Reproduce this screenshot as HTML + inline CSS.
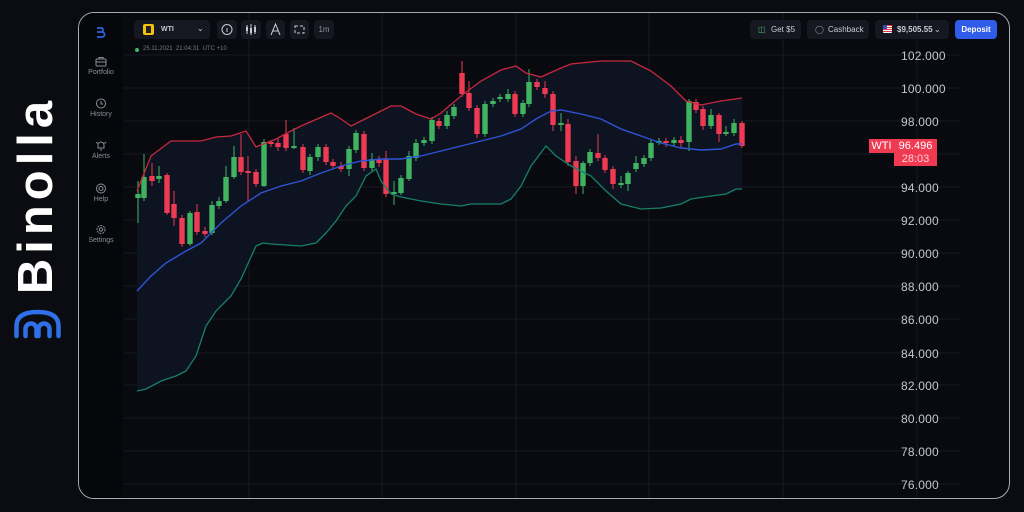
<!DOCTYPE html>
<html><head><meta charset="utf-8"><style>
*{margin:0;padding:0;box-sizing:border-box}
body{width:1024px;height:512px;background:#0b0c11;overflow:hidden;position:relative;font-family:"Liberation Sans",sans-serif}
.frame{position:absolute;left:78px;top:12px;width:932px;height:487px;border:1.5px solid #a9abb0;border-radius:16px;background:#090a0f;overflow:hidden}
.side{position:absolute;left:0;top:0;width:44px;height:100%;background:#06070b}
.nav{position:absolute;left:0;width:44px;text-align:center;color:#8c8f99;font-size:7px}
.nav svg{display:block;margin:0 auto 2px}
.btn{position:absolute;top:7px;height:19px;background:#161821;border-radius:4px;color:#c9cbd2;font-size:8px;line-height:19px}
.ax{position:absolute;left:822px;font-size:12px;color:#c4c6cc;letter-spacing:0.2px}
.brand{position:absolute;left:36px;top:195px;transform:translate(-50%,-50%) rotate(-90deg);color:#fff;font-size:49px;font-weight:bold;letter-spacing:5px;white-space:nowrap}
</style></head><body>
<div class="brand">Binolla</div>
<svg style="position:absolute;left:0;top:0" width="80" height="512">
<g fill="none" stroke="#2f6fe8" stroke-width="4.5" stroke-linecap="round">
<path d="M16.5 336 V326 Q16.5 312 37.5 312 Q58.5 312 58.5 326 V336"/>
<path d="M25.5 336 V329 a5.5 5.5 0 0 1 11 0 V336"/>
<path d="M38.5 336 V329 a5.5 5.5 0 0 1 11 0 V336"/>
</g></svg>
<div class="frame">
<svg id="ch" style="position:absolute;left:0;top:0" width="932" height="487"></svg>
<div class="side"></div>
<svg style="position:absolute;left:16px;top:13px" width="12" height="12"><path d="M2 2 H7 a2.5 2.5 0 0 1 0 4 a2.5 2.5 0 0 1 0 5 H2 M2 6 H7" fill="none" stroke="#2c62e0" stroke-width="1.8"/></svg>
<div class="nav" style="top:43px"><svg width="12" height="11"><rect x="1" y="3" width="10" height="7" rx="1" fill="none" stroke="#8c8f99"/><path d="M4 3V1.5H8V3M1 6H11" fill="none" stroke="#8c8f99"/></svg>Portfolio</div>
<div class="nav" style="top:85px"><svg width="12" height="11"><circle cx="6" cy="5.5" r="4.5" fill="none" stroke="#8c8f99"/><path d="M6 3V6H8" fill="none" stroke="#8c8f99"/></svg>History</div>
<div class="nav" style="top:127px"><svg width="12" height="11"><path d="M3 8V5a3 3 0 0 1 6 0V8H2.5H9.5M5 10H7M1 2L2.5 3.5M11 2L9.5 3.5" fill="none" stroke="#8c8f99"/></svg>Alerts</div>
<div class="nav" style="top:170px"><svg width="12" height="11"><circle cx="6" cy="5.5" r="4.5" fill="none" stroke="#8c8f99"/><circle cx="6" cy="5.5" r="2" fill="none" stroke="#8c8f99"/></svg>Help</div>
<div class="nav" style="top:211px"><svg width="12" height="11"><circle cx="6" cy="5.5" r="4" fill="none" stroke="#8c8f99" stroke-dasharray="2 1"/><circle cx="6" cy="5.5" r="1.7" fill="none" stroke="#8c8f99"/></svg>Settings</div>

<div class="btn" style="left:55px;width:76px"><span style="position:absolute;left:9px;top:4px;width:11px;height:11px;background:#f4c20d;border-radius:2px"></span><span style="position:absolute;left:12px;top:6px;width:5px;height:7px;background:#222"></span><span style="position:absolute;left:27px;font-size:7px;font-weight:bold">WTI</span><span style="position:absolute;left:63px;top:-1px;font-size:8px">&#8964;</span></div>
<div class="btn" style="left:138px;width:20px"><svg width="20" height="19"><circle cx="10" cy="9.5" r="5" fill="none" stroke="#c9cbd2"/><path d="M10 8V12" stroke="#c9cbd2"/></svg></div>
<div class="btn" style="left:162px;width:20px"><svg width="20" height="19"><path d="M6 5V14M10 4V15M14 5V14" stroke="#c9cbd2"/><rect x="5" y="7" width="2" height="4" fill="#c9cbd2"/><rect x="9" y="8" width="2" height="5" fill="#c9cbd2"/><rect x="13" y="7" width="2" height="5" fill="#c9cbd2"/></svg></div>
<div class="btn" style="left:187px;width:19px"><svg width="19" height="19"><path d="M5 15L9.5 4L14 15M7 11H12" fill="none" stroke="#c9cbd2"/></svg></div>
<div class="btn" style="left:211px;width:19px"><svg width="19" height="19"><path d="M5 6H14V13H5Z" fill="none" stroke="#c9cbd2" stroke-dasharray="3 2"/></svg></div>
<div class="btn" style="left:235px;width:20px;text-align:center;color:#8c8f99">1m</div>

<div class="btn" style="left:671px;width:51px"><span style="position:absolute;left:8px;color:#3fb866">&#9707;</span><span style="position:absolute;left:21px">Get $5</span></div>
<div class="btn" style="left:728px;width:62px"><span style="position:absolute;left:8px;color:#8c8f99">&#9711;</span><span style="position:absolute;left:21px">Cashback</span></div>
<div class="btn" style="left:796px;width:74px"><span style="position:absolute;left:8px;top:5px;width:9px;height:8px;background:repeating-linear-gradient(#e0384b 0 1px,#fff 1px 2px);border-radius:1px"></span><span style="position:absolute;left:8px;top:5px;width:4px;height:4px;background:#3150b0"></span><span style="position:absolute;left:22px;font-weight:bold">$9,505.55</span><span style="position:absolute;left:59px">&#8964;</span></div>
<div class="btn" style="left:876px;width:42px;background:#2f5ce8;color:#fff;text-align:center;font-weight:bold">Deposit</div>

<div style="position:absolute;left:56px;top:35px;width:4px;height:4px;border-radius:50%;background:#3fb866"></div>
<div style="position:absolute;left:64px;top:33px;font-size:6px;color:#777a84">25.11.2021&nbsp;&nbsp;21:04:31&nbsp;&nbsp;UTC +10</div>

<div class="ax" style="top:36px">102.000</div>
<div class="ax" style="top:69px">100.000</div>
<div class="ax" style="top:102px">98.000</div>
<div class="ax" style="top:168px">94.000</div>
<div class="ax" style="top:201px">92.000</div>
<div class="ax" style="top:234px">90.000</div>
<div class="ax" style="top:267px">88.000</div>
<div class="ax" style="top:300px">86.000</div>
<div class="ax" style="top:334px">84.000</div>
<div class="ax" style="top:366px">82.000</div>
<div class="ax" style="top:399px">80.000</div>
<div class="ax" style="top:432px">78.000</div>
<div class="ax" style="top:465px">76.000</div>
<div style="position:absolute;left:790px;top:126px;width:25px;height:14px;background:#f03a52;color:#fff;font-size:11px;line-height:14px;text-align:center">WTI</div>
<div style="position:absolute;left:815px;top:126px;width:43px;height:27px;background:#f03a52;color:#fff;font-size:11px;line-height:13px;text-align:center;padding-top:1px">96.496<br><span style="color:#ffd0d6">28:03</span></div>
</div>
<script>
var s=document.getElementById('ch'),ns='http://www.w3.org/2000/svg',ox=78,oy=12;
function el(t,a){var e=document.createElementNS(ns,t);for(var k in a)e.setAttribute(k,a[k]);s.appendChild(e);return e}
function P(pts){return pts.map(function(p,i){return(i?'L':'M')+(p[0]-ox)+' '+(p[1]-oy)}).join(' ')}
var up=[[136,190],[150,155],[170,140],[200,140],[215,136],[230,135],[245,130],[255,146],[275,138],[290,130],[300,125],[330,112],[340,118],[350,125],[370,115],[390,105],[400,105],[415,113],[430,118],[440,112],[460,95],[480,80],[500,69],[515,65],[525,72],[540,76],[560,67],[570,63],[600,60],[630,60],[650,70],[670,85],[685,100],[700,104],[720,100],[741,97]];
var mid=[[136,290],[150,275],[165,262],[185,250],[200,242],[220,222],[240,205],[260,192],[280,185],[300,180],[320,172],[340,165],[360,160],[380,158],[400,158],[420,155],[440,150],[460,145],[480,140],[500,135],[520,128],[535,118],[550,110],[560,109],[580,113],[600,118],[620,128],[640,135],[660,142],[680,147],[700,149],[720,148],[735,143],[741,143]];
var lo=[[136,390],[145,388],[160,380],[175,375],[185,370],[195,355],[205,325],[215,310],[230,295],[240,278],[255,245],[262,242],[270,243],[300,245],[315,242],[325,232],[335,220],[345,205],[355,195],[365,175],[375,168],[380,180],[390,193],[400,196],[420,200],[440,203],[460,205],[470,203],[500,203],[510,198],[520,185],[530,165],[545,145],[555,155],[570,165],[590,175],[605,190],[620,203],[640,208],[660,207],[680,203],[690,198],[710,195],[725,193],[735,188],[741,188]];
var ys=[54,87,120,153,186,219,252,285,318,352,384,417,450,483];
ys.forEach(function(y){el('line',{x1:44,x2:880,y1:y-oy,y2:y-oy,stroke:'#161925','stroke-width':1})});
[248,381,515,648,782,916].forEach(function(x){el('line',{x1:x-ox,x2:x-ox,y1:0,y2:487,stroke:'#161925','stroke-width':1})});
el('path',{d:P(up)+' '+P(lo.slice().reverse()).replace('M','L')+'Z',fill:'#0d1320'});
var C=[[137,197,193,180,222],[143,197,176,153,200],[151,175,180,162,185],[158,178,175,165,182],[166,174,212,172,214],[173,203,217,190,225],[181,217,243,214,246],[189,243,212,210,245],[196,211,231,203,234],[204,230,233,226,236],[211,232,204,200,234],[218,205,200,196,208],[225,200,176,165,202],[233,176,156,145,178],[240,156,171,133,174],[247,170,172,155,200],[255,171,183,168,186],[263,185,141,138,186],[270,141,143,139,146],[277,142,146,138,150],[285,133,147,119,150],[293,146,145,127,148],[302,146,169,143,172],[309,170,156,153,174],[317,156,146,143,160],[325,146,161,143,164],[332,161,165,158,168],[340,165,168,161,171],[348,168,148,145,175],[355,149,132,129,152],[363,133,167,130,170],[371,167,158,152,170],[378,158,162,155,166],[385,158,193,150,196],[393,193,191,180,204],[400,192,177,174,194],[408,178,155,150,180],[415,157,142,138,160],[423,142,139,136,145],[431,140,119,116,143],[438,120,125,117,128],[446,125,114,110,128],[453,115,106,103,118],[461,72,93,60,96],[468,92,107,80,110],[476,107,133,104,137],[484,133,103,100,136],[492,103,100,97,106],[499,98,96,93,101],[507,98,93,88,101],[514,93,113,90,116],[522,113,102,99,116],[528,103,81,68,106],[536,81,86,78,89],[544,87,93,80,97],[552,93,124,90,130],[560,123,122,112,130],[567,123,161,118,165],[575,160,185,155,193],[582,185,162,160,193],[589,162,151,148,165],[597,152,157,133,160],[604,157,169,154,172],[612,168,183,165,188],[620,183,182,175,187],[627,183,172,170,190],[635,168,162,155,171],[643,163,157,154,166],[650,157,142,138,160],[658,141,140,137,144],[665,140,142,137,146],[673,142,139,136,145],[680,139,142,135,147],[688,141,100,98,150],[695,101,109,98,112],[702,108,125,105,129],[710,125,114,108,128],[718,114,133,112,141],[725,132,131,125,135],[733,132,122,118,135],[741,122,145,120,147]];
C.forEach(function(c){var col=c[2]<c[1]?'#3fb35f':'#ee3a52';if(Math.abs(c[2]-c[1])<1.5)col=c[2]<=c[1]?'#3fb35f':'#ee3a52';
el('line',{x1:c[0]-ox,x2:c[0]-ox,y1:c[3]-oy,y2:c[4]-oy,stroke:col,'stroke-width':1});
var t=Math.min(c[1],c[2]),h=Math.max(2,Math.abs(c[2]-c[1]));el('rect',{x:c[0]-ox-2.7,y:t-oy,width:5.4,height:h,fill:col})});
el('path',{d:P(up),fill:'none',stroke:'#c8283f','stroke-width':1.3});
el('path',{d:P(mid),fill:'none',stroke:'#2d55d6','stroke-width':1.4});
el('path',{d:P(lo),fill:'none',stroke:'#16806a','stroke-width':1.3});
</script>
</body></html>
